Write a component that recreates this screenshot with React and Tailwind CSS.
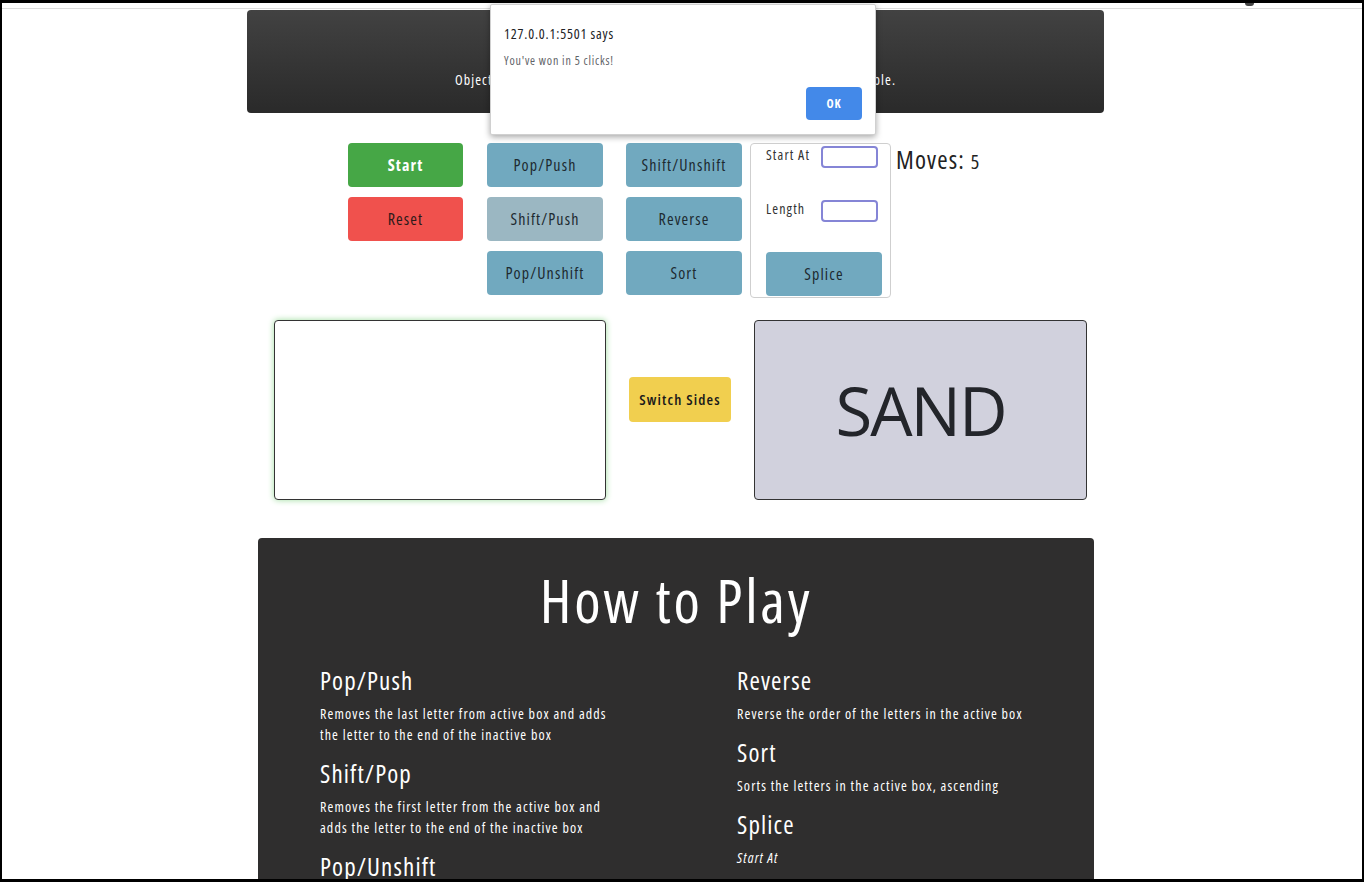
import React from 'react'

const font = { fontFamily: '"Open Sans", "DejaVu Sans", sans-serif' }

const ActionButton = ({ label, faded }) => (
  <button
    className={`h-[44px] w-[116px] rounded-[4px] text-[16px] text-[#1d2a30] ${
      faded ? 'bg-[#9bb7c2]' : 'bg-[#71a9bf]'
    }`}
  >
    {label}
  </button>
)

const Rule = ({ title, children }) => (
  <div className="mb-[11px]">
    <h3 className="text-[25px] leading-[34px] text-white">{title}</h3>
    <div className="text-[14px] leading-[21px] text-white mt-[6px]">{children}</div>
  </div>
)

export default function App() {
  return (
    <div
      className="relative h-[882px] w-full overflow-hidden bg-white border-x-2 border-t-[3px] border-b-[3px] border-black font-stretch-[75%] tracking-[0.07em]"
      style={font}
    >
      {/* browser chrome bits */}
      <div className="absolute left-[1243px] top-0 h-[3px] w-[9px] rounded-b-sm bg-[#444]"></div>
      <div className="mt-[5px] h-px w-full bg-[#dcdcdc]"></div>

      {/* Header */}
      <div className="ml-[245px] mt-px flex h-[103px] w-[857px] flex-col items-center rounded-[4px] bg-gradient-to-b from-[#424242] to-[#2a2a2a] text-white">
        <h1 className="mt-[18px] text-[28px] leading-[36px]">Word Shuffle</h1>
        <p className="mt-[6px] text-[14px] leading-[20px]">
          Objective: Move every letter into the other box in as few clicks as possible.
        </p>
      </div>

      {/* Controls */}
      <div className="mt-[30px] ml-[346px] flex items-start">
        <div className="flex w-[115px] flex-col gap-[10px]">
          <button className="h-[44px] w-[115px] rounded-[4px] bg-[#46a746] text-[16px] font-bold text-white">Start</button>
          <button className="h-[44px] w-[115px] rounded-[4px] bg-[#f0514d] text-[16px] text-[#2b1a1a]">Reset</button>
        </div>
        <div className="ml-[24px] flex flex-col gap-[10px]">
          <ActionButton label="Pop/Push" />
          <ActionButton label="Shift/Push" faded />
          <ActionButton label="Pop/Unshift" />
        </div>
        <div className="ml-[23px] flex flex-col gap-[10px]">
          <ActionButton label="Shift/Unshift" />
          <ActionButton label="Reverse" />
          <ActionButton label="Sort" />
        </div>
        <div className="ml-[8px] flex h-[155px] w-[141px] flex-col rounded-[4px] border border-[#cfcfcf] px-[15px] pt-[2px]">
          <div className="flex items-start justify-between">
            <span className="text-[14px] leading-[18px] text-[#333]">Start At</span>
            <input className="mr-[-3px] h-[22px] w-[57px] rounded-[4px] border-2 border-[#8585d6] bg-white" />
          </div>
          <div className="mt-[32px] flex items-start justify-between">
            <span className="text-[14px] leading-[18px] text-[#333]">Length</span>
            <input className="mr-[-3px] h-[22px] w-[57px] rounded-[4px] border-2 border-[#8585d6] bg-white" />
          </div>
          <button className="mt-[30px] h-[44px] w-[116px] rounded-[4px] bg-[#71a9bf] text-[16px] text-[#1d2a30]">Splice</button>
        </div>
        <div className="ml-[5px] flex items-baseline text-[#222]">
          <span className="text-[25px] leading-[32px]">Moves:</span>
          <span className="ml-[6px] text-[20px]">5</span>
        </div>
      </div>

      {/* Word boxes */}
      <div className="mt-[22px] ml-[272px] flex items-start">
        <div className="h-[180px] w-[332px] rounded-[4px] border border-[#333] bg-white shadow-[0_0_6px_#9ddc9d]"></div>
        <button className="ml-[23px] mt-[57px] h-[45px] w-[102px] rounded-[4px] bg-[#f1cf4f] text-[15px] font-semibold text-[#1a1a1a]">
          Switch Sides
        </button>
        <div className="ml-[23px] flex h-[180px] w-[333px] items-center justify-center rounded-[4px] border border-[#333] bg-[#d1d1dd]">
          <span className="text-[67px] leading-none font-stretch-normal tracking-[-0.03em] text-[#23252a]">SAND</span>
        </div>
      </div>

      {/* How to play */}
      <div className="mt-[38px] ml-[256px] w-[836px] rounded-t-[4px] bg-[#2f2e2e] pb-10">
        <h2 className="pt-[22px] text-center text-[60px] leading-[80px] tracking-[0.045em] text-white">How to Play</h2>
        <div className="mt-[23px] ml-[62px] grid grid-cols-[300px_300px] gap-x-[117px]">
          <div>
            <Rule title="Pop/Push">
              Removes the last letter from active box and adds the letter to the end of the inactive box
            </Rule>
            <Rule title="Shift/Pop">
              Removes the first letter from the active box and adds the letter to the end of the inactive box
            </Rule>
            <Rule title="Pop/Unshift">
              Removes the last letter from the active box and adds the letter to the start of the inactive box
            </Rule>
          </div>
          <div>
            <Rule title="Reverse">Reverse the order of the letters in the active box</Rule>
            <Rule title="Sort">Sorts the letters in the active box, ascending</Rule>
            <Rule title="Splice">
              <em>Start At</em>
            </Rule>
          </div>
        </div>
      </div>

      {/* Alert dialog */}
      <div className="absolute left-[488px] top-[1px] h-[131px] w-[386px] rounded-[2px] border border-[#d0d0d0] bg-white tracking-[0.05em] shadow-[0_2px_6px_rgba(0,0,0,0.35)]">
        <div className="ml-[13px] mt-[20px] text-[14px] leading-[18px] text-[#202124]">127.0.0.1:5501 says</div>
        <div className="ml-[13px] mt-[10px] text-[12px] leading-[16px] text-[#5f6368]">You've won in 5 clicks!</div>
        <div className="mt-[18px] mr-[13px] flex justify-end">
          <button className="h-[33px] w-[56px] rounded-[4px] bg-[#4389e9] text-[12px] font-bold text-white">OK</button>
        </div>
      </div>
    </div>
  )
}
